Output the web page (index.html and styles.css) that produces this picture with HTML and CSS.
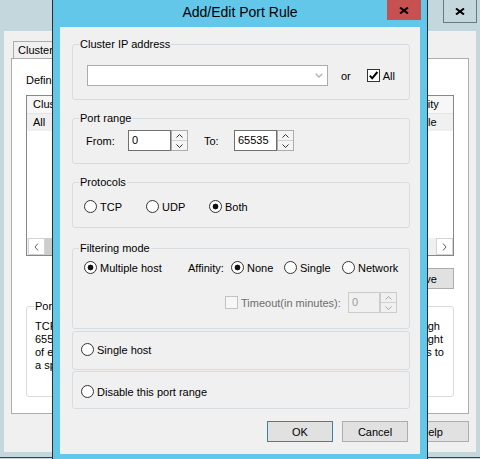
FILE: index.html
```html
<!DOCTYPE html>
<html>
<head>
<meta charset="utf-8">
<link rel="stylesheet" href="styles.css">
</head>
<body>
<div class="bgwin">
  <div class="bg-titlebar">
    <span class="bg-close"><svg width="10" height="7" viewBox="0 0 10 7"><path d="M1 0.5 L9 6.5 M9 0.5 L1 6.5" stroke="#000" stroke-width="2"/></svg></span>
  </div>
  <div class="bg-client">
    <div class="tabs">
      <span class="tab">Cluster IP Addresses</span>
      <span class="tab">Cluster Parameters</span>
      <span class="tab tab-active">Port Rules</span>
    </div>
    <div class="tab-panel">
      <div class="bg-caption">Defined port rules:</div>
      <div class="listview">
        <div class="lv-head"><span>Cluster IP address</span><span>Start</span><span>End</span><span>Protocol</span><span>Mode</span><span>Priority</span><span>Load</span><span>Affinity</span></div>
        <div class="lv-row"><span>All</span><span>0</span><span>65535</span><span>Both</span><span>Multiple</span><span></span><span>Equal</span><span>Single</span></div>
        <div class="hscroll">
          <span class="sb-btn"><svg width="5" height="8" viewBox="0 0 5 8"><path d="M4 0.5 L1 4 L4 7.5" fill="none" stroke="#606060"/></svg></span>
          <span class="sb-thumb"></span>
          <span class="sb-track"></span>
          <span class="sb-btn"><svg width="5" height="8" viewBox="0 0 5 8"><path d="M1 0.5 L4 4 L1 7.5" fill="none" stroke="#606060"/></svg></span>
        </div>
      </div>
      <div class="bg-btnrow">
        <span class="bg-btn">Add...</span>
        <span class="bg-btn">Edit...</span>
        <span class="bg-btn">Remove</span>
      </div>
      <div class="desc-group">
        <span class="desc-legend">Port rule description</span>
        <div class="desc-line l1"><span>TCP and UDP traffic to any cluster IP address</span><span>on ports 0 through</span></div>
        <div class="desc-line l2"><span>65535 is balanced across multiple members of the</span><span>cluster by load weight</span></div>
        <div class="desc-line l3"><span>of each member. Client IP addresses are used</span><span>to assign connections to</span></div>
        <div class="desc-line"><span>a specific cluster host.</span></div>
      </div>
    </div>
    <div class="bg-bottom">
      <span class="bg-btn">OK</span>
      <span class="bg-btn">Cancel</span>
      <span class="bg-btn">Help</span>
    </div>
  </div>
</div>

<div class="dialog">
  <div class="dlg-title">
    <span class="dlg-title-text">Add/Edit Port Rule</span>
    <span class="dlg-close"><svg width="10" height="7" viewBox="0 0 10 7"><path d="M1 0.5 L9 6.5 M9 0.5 L1 6.5" stroke="#000" stroke-width="2"/></svg></span>
  </div>
  <div class="dlg-client">
    <div class="group g-ip">
      <span class="legend">Cluster IP address</span>
      <div class="row">
        <div class="combo"><svg width="8" height="5" viewBox="0 0 8 5"><path d="M0.7 0.7 L4 4 L7.3 0.7" fill="none" stroke="#b4b4b4" stroke-width="1.4"/></svg></div>
        <span class="or">or</span>
        <span class="check"><svg width="11" height="11" viewBox="0 0 11 11"><path d="M1.8 5.6 L4.2 8.3 L9.4 2" fill="none" stroke="#000" stroke-width="2"/></svg></span>
        <span class="check-label">All</span>
      </div>
    </div>

    <div class="group g-port">
      <span class="legend">Port range</span>
      <div class="row">
        <span class="lbl-from">From:</span>
        <span class="field">0</span>
        <span class="spin">
          <span class="spin-half"><svg width="7" height="4" viewBox="0 0 7 4"><path d="M0.5 3.5 L3.5 0.5 L6.5 3.5" fill="none" stroke="#333"/></svg></span>
          <span class="spin-half"><svg width="7" height="4" viewBox="0 0 7 4"><path d="M0.5 0.5 L3.5 3.5 L6.5 0.5" fill="none" stroke="#333"/></svg></span>
        </span>
        <span class="lbl-to">To:</span>
        <span class="field">65535</span>
        <span class="spin">
          <span class="spin-half"><svg width="7" height="4" viewBox="0 0 7 4"><path d="M0.5 3.5 L3.5 0.5 L6.5 3.5" fill="none" stroke="#333"/></svg></span>
          <span class="spin-half"><svg width="7" height="4" viewBox="0 0 7 4"><path d="M0.5 0.5 L3.5 3.5 L6.5 0.5" fill="none" stroke="#333"/></svg></span>
        </span>
      </div>
    </div>

    <div class="group g-proto">
      <span class="legend">Protocols</span>
      <div class="row">
        <label class="opt w-tcp"><input class="radio" type="radio" name="proto">TCP</label>
        <label class="opt w-udp"><input class="radio" type="radio" name="proto">UDP</label>
        <label class="opt"><input class="radio" type="radio" name="proto" checked>Both</label>
      </div>
    </div>

    <div class="group g-filter">
      <span class="legend">Filtering mode</span>
      <div class="row">
        <label class="opt w-multi"><input class="radio" type="radio" name="mode" checked>Multiple host</label>
        <span class="lbl-aff">Affinity:</span>
        <label class="opt w-none"><input class="radio" type="radio" name="aff" checked>None</label>
        <label class="opt w-single"><input class="radio" type="radio" name="aff">Single</label>
        <label class="opt"><input class="radio" type="radio" name="aff">Network</label>
      </div>
      <div class="row row-timeout">
        <span class="check check-disabled"></span>
        <span class="lbl-timeout">Timeout(in minutes):</span>
        <span class="field field-disabled">0</span>
        <span class="spin spin-disabled">
          <span class="spin-half"><svg width="7" height="4" viewBox="0 0 7 4"><path d="M0.5 3.5 L3.5 0.5 L6.5 3.5" fill="none" stroke="#a6a6a6"/></svg></span>
          <span class="spin-half"><svg width="7" height="4" viewBox="0 0 7 4"><path d="M0.5 0.5 L3.5 3.5 L6.5 0.5" fill="none" stroke="#a6a6a6"/></svg></span>
        </span>
      </div>
    </div>

    <div class="group g-single">
      <div class="row">
        <label class="opt"><input class="radio" type="radio" name="mode">Single host</label>
      </div>
    </div>

    <div class="group g-disable">
      <div class="row">
        <label class="opt"><input class="radio" type="radio" name="mode">Disable this port range</label>
      </div>
    </div>

    <div class="btnrow">
      <span class="btn btn-default">OK</span>
      <span class="btn">Cancel</span>
    </div>
  </div>
</div>
</body>
</html>
```

FILE: styles.css
```css
* { box-sizing: border-box; }

body {
  margin: 0;
  width: 480px;
  height: 459px;
  overflow: hidden;
  position: relative;
  background: #c4d7dd;
  font-family: "Liberation Sans", Arial, sans-serif;
  font-size: 11px;
  color: #000;
}

/* ---------- background window ---------- */
.bgwin {
  position: absolute;
  left: 0;
  top: 0;
  width: 480px;
  height: 458px;
  border-bottom: 1px solid #3f3f3f;
  background: #c4d7dd;
  display: flex;
  flex-direction: column;
}

.bg-titlebar {
  flex: none;
  height: 31px;
  display: flex;
  justify-content: flex-end;
  align-items: flex-start;
  padding-right: 3px;
}

.bg-close {
  width: 34px;
  height: 23px;
  border: 1px solid #6a777c;
  border-top: none;
  display: flex;
  align-items: center;
  justify-content: center;
  background: #c4d7dd;
}

.bg-client {
  flex: 1;
  margin: 0 4px 5px 4px;
  background: #f0f0f0;
  padding: 10px 7px 0 7px;
  display: flex;
  flex-direction: column;
}

.tabs {
  display: flex;
  height: 17px;
  padding-left: 2px;
}

.tab {
  border: 1px solid #acacac;
  border-bottom: none;
  padding: 1px 5px 0 4px;
  line-height: 15px;
  background: #f0f0f0;
  white-space: nowrap;
}

.tab-active { background: #fff; }

.tab-panel {
  width: 458px;
  height: 356px;
  background: #fff;
  border: 1px solid #adadad;
  padding: 14px 14px 0 14px;
  display: flex;
  flex-direction: column;
}

.bg-caption { line-height: 14px; }

.listview {
  margin-top: 8px;
  height: 161px;
  border: 1px solid #828790;
  display: flex;
  flex-direction: column;
}

.lv-head, .lv-row {
  display: grid;
  grid-template-columns: 105px 40px 45px 50px 50px 45px 38px auto;
  padding: 0 0 0 6px;
  white-space: nowrap;
  overflow: hidden;
}

.lv-head {
  height: 18px;
  line-height: 17px;
  background: #f7f7f7;
  border-bottom: 1px solid #e5e5e5;
}

.lv-row {
  height: 17px;
  line-height: 17px;
  background: #f0f0f0;
}

.hscroll {
  margin-top: auto;
  height: 17px;
  display: flex;
  background: #f0f0f0;
  padding: 0 0 0 1px;
}

.sb-btn {
  width: 17px;
  height: 17px;
  border: 1px solid #d4d4d4;
  background: #fff;
  display: flex;
  align-items: center;
  justify-content: center;
  flex: none;
}

.sb-thumb {
  width: 60px;
  background: #cdcdcd;
  flex: none;
}

.sb-track { flex: 1; }

.bg-btnrow {
  margin-top: 12px;
  display: flex;
  justify-content: flex-end;
  gap: 6px;
}

.bg-btn {
  width: 75px;
  height: 21px;
  border: 1px solid #adadad;
  background: #e1e1e1;
  display: flex;
  align-items: center;
  justify-content: center;
}

.desc-group {
  position: relative;
  margin-top: 17px;
  height: 91px;
  border: 1px solid #dcdcdc;
  border-radius: 3px;
  padding: 13px 0 0 8px;
}

.desc-legend {
  position: absolute;
  top: -8px;
  left: 7px;
  padding: 0 1px;
  background: #fff;
  line-height: 15px;
}

.desc-line {
  display: flex;
  justify-content: space-between;
  line-height: 13px;
  white-space: nowrap;
}

.l1 { padding-right: 13px; }
.l2 { padding-right: 10px; }
.l3 { padding-right: 9px; }

.bg-bottom {
  margin-top: 7px;
  display: flex;
  justify-content: flex-end;
  gap: 9px;
}

/* ---------- dialog ---------- */
.dialog {
  position: absolute;
  left: 52px;
  top: 0;
  width: 376px;
  height: 459px;
  background: #63c7e9;
  border-left: 1px solid #2d2d2d;
  border-right: 1px solid #2d2d2d;
  padding: 0 7px;
  display: flex;
  flex-direction: column;
}

.dlg-title {
  flex: none;
  height: 27px;
  display: grid;
  grid-template-columns: 1fr auto 1fr;
}

.dlg-title-text {
  grid-column: 2;
  font-size: 14px;
  line-height: 24px;
  color: #000;
}

.dlg-close {
  grid-column: 3;
  justify-self: end;
  width: 34px;
  height: 20px;
  margin-right: -1px;
  background: #c75050;
  display: flex;
  align-items: center;
  justify-content: center;
}

.dlg-client {
  flex: none;
  height: 427px;
  background: #f0f0f0;
  padding: 17px 10px 0 12px;
  display: flex;
  flex-direction: column;
}

.group {
  position: relative;
  flex: none;
  border: 1px solid #d5dde3;
  border-radius: 3px;
}

.legend {
  position: absolute;
  top: -8px;
  left: 6px;
  padding: 0 1px;
  background: #f0f0f0;
  line-height: 15px;
  white-space: nowrap;
}

.row {
  display: flex;
  align-items: center;
  white-space: nowrap;
}

.g-ip { height: 56px; padding: 20px 0 0 14px; }
.g-port { margin-top: 18px; height: 46px; padding: 11px 0 0 13px; }
.g-proto { margin-top: 18px; height: 46px; padding: 17px 0 0 11px; }
.g-filter { margin-top: 20px; height: 81px; padding: 12px 0 0 11px; }
.g-single { margin-top: 2px; height: 39px; padding: 11px 0 0 8px; }
.g-disable { margin-top: 1px; height: 38px; padding: 13px 0 0 8px; }

.combo {
  width: 241px;
  height: 21px;
  border: 1px solid #acacac;
  background: #fff;
  display: flex;
  align-items: center;
  justify-content: flex-end;
  padding-right: 4px;
}

.or { margin-left: 13px; }

.check {
  width: 13px;
  height: 13px;
  border: 1px solid #333;
  background: #fff;
  margin-left: 16px;
  display: flex;
  align-items: center;
  justify-content: center;
  flex: none;
}

.check-label { margin-left: 3px; }

.lbl-from { width: 42px; }
.lbl-to { width: 30px; margin-left: 16px; }

.field {
  width: 43px;
  height: 21px;
  border: 1px solid #707070;
  background: #fff;
  padding-left: 3px;
  line-height: 19px;
  flex: none;
}

.spin {
  width: 17px;
  height: 21px;
  border: 1px solid #acacac;
  background: #f4f4f4;
  display: flex;
  flex-direction: column;
  flex: none;
}

.spin-half {
  flex: 1;
  display: flex;
  align-items: center;
  justify-content: center;
}

.spin-half + .spin-half { border-top: 1px solid #d0d0d0; }

.opt {
  display: flex;
  align-items: center;
  gap: 3px;
  height: 13px;
  flex: none;
}

.radio {
  -webkit-appearance: none;
  appearance: none;
  margin: 0;
  width: 13px;
  height: 13px;
  border: 1px solid #333;
  border-radius: 50%;
  background: #fff;
  flex: none;
}

.radio:checked {
  background: radial-gradient(circle at center, #111 0 2.6px, #fff 3.2px);
}

.w-tcp { width: 62px; }
.w-udp { width: 63px; }
.w-multi { width: 104px; }
.lbl-aff { width: 43px; }
.w-none { width: 53px; }
.w-single { width: 58px; }

.row-timeout { margin-top: 18px; padding-left: 141px; }

.check-disabled {
  margin-left: 0;
  border-color: #c2c2c2;
  background: #f7f7f7;
}

.lbl-timeout {
  width: 107px;
  margin-left: 3px;
  color: #6d6d6d;
}

.field-disabled {
  width: 32px;
  border-color: #cccccc;
  background: #f0f0f0;
  color: #9a9a9a;
}

.spin-disabled {
  border-color: #cccccc;
  background: #f0f0f0;
}

.btnrow {
  margin-top: 12px;
  display: flex;
  justify-content: flex-end;
  gap: 9px;
  padding-right: 2px;
}

.btn {
  width: 66px;
  height: 21px;
  border: 1px solid #adadad;
  background: #e1e1e1;
  display: flex;
  align-items: center;
  justify-content: center;
}

.btn-default { border-color: #3c7fb1; }
```
